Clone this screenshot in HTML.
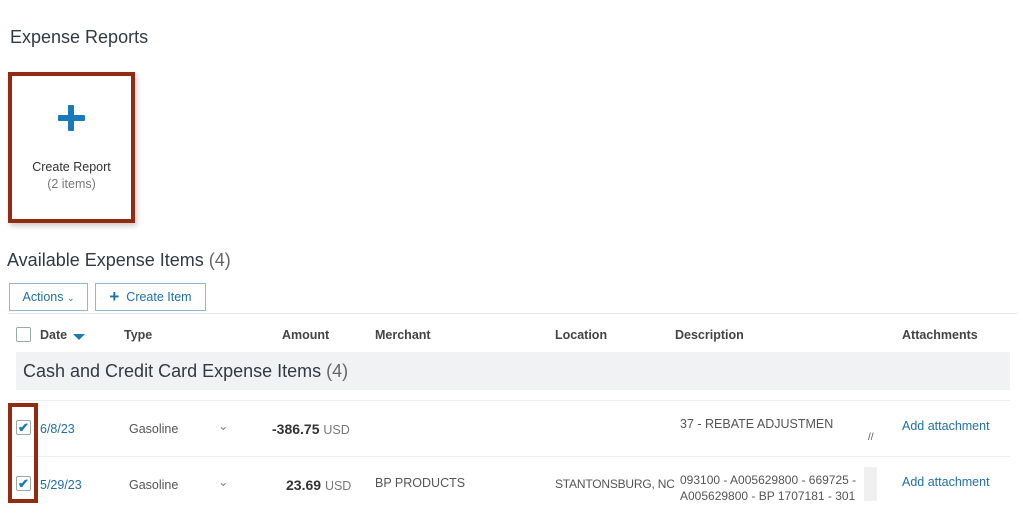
<!DOCTYPE html>
<html><head><meta charset="utf-8"><style>
body{margin:0;width:1020px;height:507px;background:#fff;font-family:"Liberation Sans",sans-serif;position:relative;overflow:hidden;color:#333}
.a{position:absolute;white-space:nowrap}
.h{font-size:18px;color:#2f3a45}
.th{font-size:12.5px;font-weight:bold;color:#444;top:328px}
.td{font-size:12.5px;color:#555}
.lnk{color:#1f6fa6}
.cb{position:absolute;width:13px;height:13px;border:1px solid #9aa;border-radius:2px;background:#fff}
.btn{position:absolute;height:26px;border:1px solid #8fb8d6;font-size:12.5px;color:#1f6fa6;line-height:26px;text-align:center;background:#fff}
</style></head><body>
<div class="a h" style="left:10px;top:27px">Expense Reports</div>
<div class="a" style="left:8px;top:72px;width:119px;height:143px;border:4px solid #932a12;background:#fff;box-shadow:2px 3px 5px rgba(0,0,0,.2)"></div>
<div class="a" style="left:58px;top:115px;width:27px;height:6px;background:#1a7ab8;border-radius:1px"></div>
<div class="a" style="left:68px;top:105px;width:6px;height:26px;background:#1a7ab8;border-radius:1px"></div>
<div class="a" style="left:12px;width:119px;top:160px;text-align:center;font-size:12.5px;color:#333">Create Report</div>
<div class="a" style="left:12px;width:119px;top:177px;text-align:center;font-size:12.5px;color:#777">(2 items)</div>
<div class="a h" style="left:7px;top:250px">Available Expense Items <span style="color:#666">(4)</span></div>
<div class="btn" style="left:9px;top:283px;width:77px">Actions <span style="font-size:9px">&#8964;</span></div>
<div class="btn" style="left:95px;top:283px;width:109px"><span style="font-weight:bold;font-size:17px;vertical-align:-1px">+</span>&nbsp; Create Item</div>
<div class="a" style="left:8px;top:313px;width:1010px;height:1px;background:#e6e6e6"></div>
<div class="cb" style="left:16px;top:327px"></div>
<div class="a th" style="left:40px">Date</div>
<div class="a" style="left:73px;top:334px;border-left:6px solid transparent;border-right:6px solid transparent;border-top:6px solid #1a7ab8"></div>
<div class="a th" style="left:124px">Type</div>
<div class="a th" style="left:282px">Amount</div>
<div class="a th" style="left:375px">Merchant</div>
<div class="a th" style="left:555px">Location</div>
<div class="a th" style="left:675px">Description</div>
<div class="a th" style="left:902px">Attachments</div>
<div class="a" style="left:16px;top:352px;width:994px;height:38px;background:#f1f2f3"></div>
<div class="a h" style="left:23px;top:361px">Cash and Credit Card Expense Items <span style="color:#666">(4)</span></div>
<div class="a" style="left:16px;top:400px;width:994px;height:1px;background:#eee"></div>
<div class="a" style="left:16px;top:456px;width:994px;height:1px;background:#eee"></div>
<div class="a" style="left:8px;top:403px;width:22px;height:92px;border:4px solid #932a12"></div>
<div class="cb" style="left:16px;top:420px;color:#1a7ab8;font-size:13px;line-height:13px;text-align:center;font-weight:bold">✔</div>
<div class="cb" style="left:16px;top:476px;color:#1a7ab8;font-size:13px;line-height:13px;text-align:center;font-weight:bold">✔</div>
<div class="a td lnk" style="left:40px;top:422px">6/8/23</div>
<div class="a td lnk" style="left:40px;top:478px">5/29/23</div>
<div class="a td" style="left:129px;top:422px">Gasoline</div>
<div class="a td" style="left:129px;top:478px">Gasoline</div>
<div class="a td" style="left:218px;top:418px;color:#888">&#8964;</div>
<div class="a td" style="left:218px;top:474px;color:#888">&#8964;</div>
<div class="a" style="left:272px;top:421px;font-size:14px;font-weight:bold;color:#333">-386.75 <span style="font-size:12.5px;font-weight:normal;color:#777">USD</span></div>
<div class="a" style="left:286px;top:477px;font-size:14px;font-weight:bold;color:#333">23.69 <span style="font-size:12.5px;font-weight:normal;color:#777">USD</span></div>
<div class="a td" style="left:375px;top:476px">BP PRODUCTS</div>
<div class="a td" style="left:555px;top:477px;font-size:12px;letter-spacing:-0.2px">STANTONSBURG, NC</div>
<div class="a td" style="left:680px;top:417px">37 - REBATE ADJUSTMEN</div>
<div class="a td" style="left:868px;top:432px;font-size:10px">//</div>
<div class="a td" style="left:680px;top:472px;line-height:16px;font-size:12px">093100 - A005629800 - 669725 -<br>A005629800 - BP 1707181 - 301</div>
<div class="a" style="left:864px;top:467px;width:13px;height:34px;background:#f0f0f0"></div>
<div class="a td lnk" style="left:902px;top:419px">Add attachment</div>
<div class="a td lnk" style="left:902px;top:475px">Add attachment</div>
</body></html>
